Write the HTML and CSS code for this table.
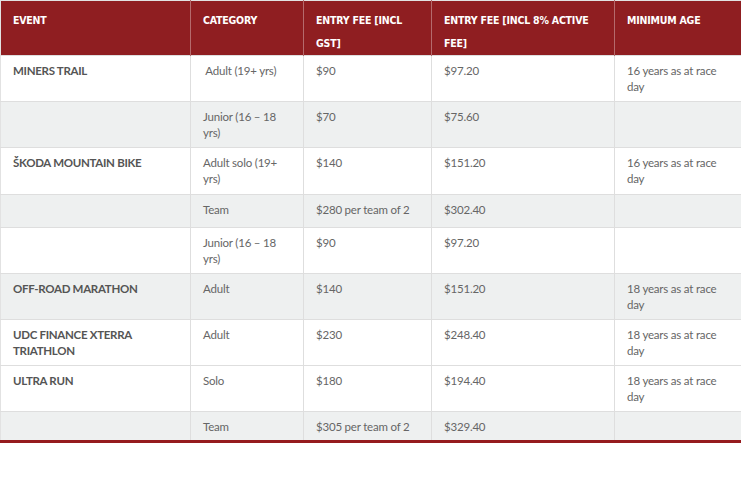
FILE: index.html
```html
<!DOCTYPE html>
<html>
<head>
<meta charset="utf-8">
<link rel="stylesheet" href="styles.css">
</head>
<body>
<div class="wrap">
<table class="fees">
<colgroup>
<col class="c1"><col class="c2"><col class="c3"><col class="c4"><col class="c5">
</colgroup>
<thead>
<tr>
<th>EVENT</th>
<th>CATEGORY</th>
<th>ENTRY FEE [INCL GST]</th>
<th>ENTRY FEE [INCL 8% ACTIVE FEE]</th>
<th>MINIMUM AGE</th>
</tr>
</thead>
<tbody>
<tr class="two">
<td class="ev">MINERS TRAIL</td><td>&nbsp;Adult (19+ yrs)</td><td>$90</td><td>$97.20</td><td>16 years as at race day</td>
</tr>
<tr class="two alt">
<td></td><td>Junior (16 – 18 yrs)</td><td>$70</td><td>$75.60</td><td></td>
</tr>
<tr class="two tall">
<td class="ev">ŠKODA MOUNTAIN BIKE</td><td>Adult solo (19+ yrs)</td><td>$140</td><td>$151.20</td><td>16 years as at race day</td>
</tr>
<tr class="one alt">
<td></td><td>Team</td><td>$280 per team of 2</td><td>$302.40</td><td></td>
</tr>
<tr class="two">
<td></td><td>Junior (16 – 18 yrs)</td><td>$90</td><td>$97.20</td><td></td>
</tr>
<tr class="two alt">
<td class="ev">OFF-ROAD MARATHON</td><td>Adult</td><td>$140</td><td>$151.20</td><td>18 years as at race day</td>
</tr>
<tr class="two">
<td class="ev">UDC FINANCE XTERRA TRIATHLON</td><td>Adult</td><td>$230</td><td>$248.40</td><td>18 years as at race day</td>
</tr>
<tr class="two">
<td class="ev">ULTRA RUN</td><td>Solo</td><td>$180</td><td>$194.40</td><td>18 years as at race day</td>
</tr>
<tr class="last alt">
<td></td><td>Team</td><td>$305 per team of 2</td><td>$329.40</td><td></td>
</tr>
</tbody>
</table>
</div>
</body>
</html>
```
FILE: styles.css
```css
html, body {
  margin: 0;
  padding: 0;
  background: #ffffff;
}
.wrap {
  width: 741px;
  height: 486px;
  overflow: hidden;
}
.fees {
  border-collapse: collapse;
  table-layout: fixed;
  width: 742px;
  font-family: "Lato", "Liberation Sans", sans-serif;
  font-size: 11.5px;
  letter-spacing: -0.2px;
  line-height: 16px;
  color: #666666;
  border-top: 1px solid #e2e2e2;
  border-left: 1px solid #e2e2e2;
  border-bottom: 3px solid #951b1e;
}
.c1 { width: 190px; }
.c2 { width: 113px; }
.c3 { width: 128px; }
.c4 { width: 183px; }
.c5 { width: 128px; }
.fees th {
  background: #8f1e21;
  color: #ffffff;
  text-align: left;
  vertical-align: top;
  font-family: "DejaVu Sans Condensed", "DejaVu Sans", sans-serif;
  font-weight: bold;
  font-size: 10.5px;
  line-height: 23px;
  letter-spacing: -0.2px;
  padding: 8px 12px 0 12px;
  height: 48px;
  box-sizing: border-box;
  border-left: 1px solid #b56a6c;
}
.fees th:first-child { border-left: none; }
.fees td {
  vertical-align: top;
  padding: 7px 12px 0 12px;
  border: 1px solid #dedede;
  box-sizing: border-box;
}
.fees td:first-child { border-left: none; }
.fees tr.two td { height: 46px; }
.fees tr.tall td { height: 47px; }
.fees tr.one td { height: 33px; }
.fees tr.last td { height: 30px; border-bottom: none; }
.fees tr.alt td { background: #eef0f0; }
.fees td.ev {
  font-weight: bold;
  color: #555555;
  letter-spacing: -0.3px;
}
```
